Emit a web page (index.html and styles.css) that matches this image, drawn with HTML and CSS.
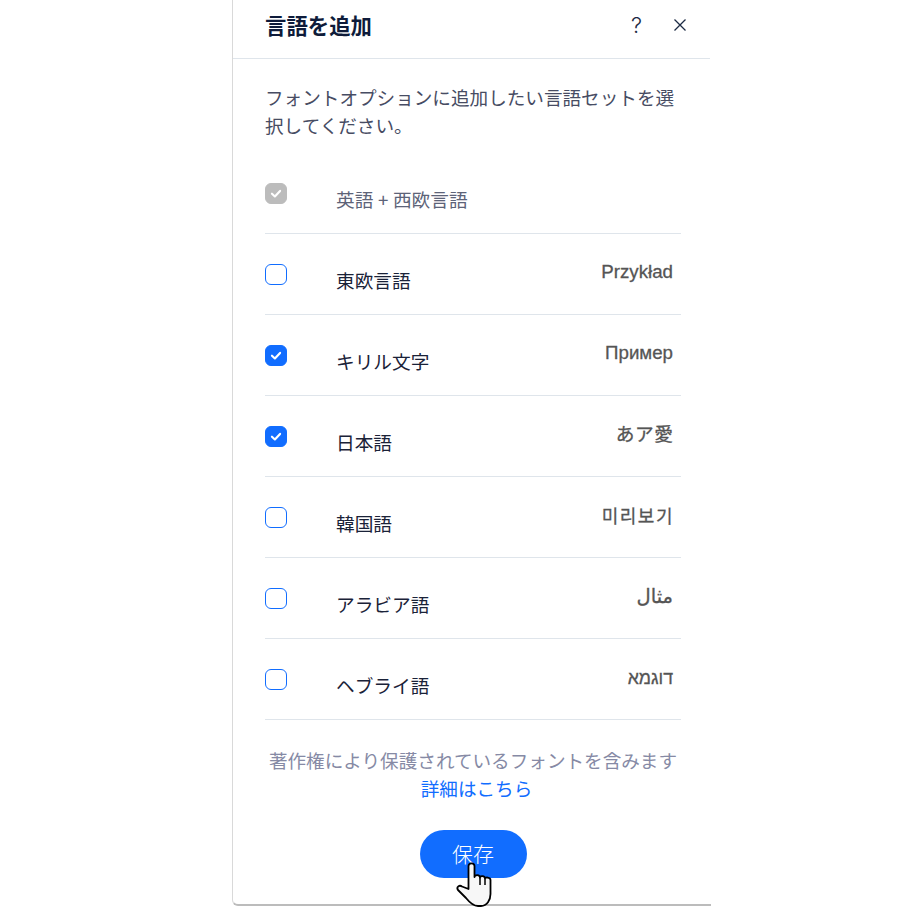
FILE: index.html
```html
<!DOCTYPE html>
<html lang="ja">
<head>
<meta charset="utf-8">
<title>言語を追加</title>
<link rel="stylesheet" href="styles.css">
</head>
<body>
<main class="panel">
  <header class="head">
    <h1 class="title">言語を追加</h1>
    <div class="head-actions">
      <span class="help">?</span>
      <svg class="close" viewBox="0 0 14 14" width="14" height="14"><path d="M1.5 1.5 12.5 12.5M12.5 1.5 1.5 12.5"/></svg>
    </div>
  </header>
  <div class="content">
    <p class="desc">フォントオプションに追加したい言語セットを選択してください。</p>
    <ul class="list">
      <li class="row row-first">
        <span class="box box-disabled"><svg viewBox="0 0 22 22"><path d="M6.3 11.2 9.7 14.4 15.7 8"/></svg></span>
        <span class="label label-disabled">英語 + 西欧言語</span>
      </li>
      <li class="row">
        <span class="box"></span>
        <span class="label">東欧言語</span>
        <span class="sample">Przykład</span>
      </li>
      <li class="row">
        <span class="box box-on"><svg viewBox="0 0 22 22"><path d="M6.3 11.2 9.7 14.4 15.7 8"/></svg></span>
        <span class="label">キリル文字</span>
        <span class="sample">Пример</span>
      </li>
      <li class="row">
        <span class="box box-on"><svg viewBox="0 0 22 22"><path d="M6.3 11.2 9.7 14.4 15.7 8"/></svg></span>
        <span class="label">日本語</span>
        <span class="sample sample-ja">あア愛</span>
      </li>
      <li class="row">
        <span class="box"></span>
        <span class="label">韓国語</span>
        <span class="sample" lang="ko">미리보기</span>
      </li>
      <li class="row">
        <span class="box"></span>
        <span class="label">アラビア語</span>
        <span class="sample" lang="ar" dir="rtl">مثال</span>
      </li>
      <li class="row">
        <span class="box"></span>
        <span class="label">ヘブライ語</span>
        <span class="sample" lang="he" dir="rtl">דוגמא</span>
      </li>
    </ul>
    <p class="note">著作権により保護されているフォントを含みます<br><a class="link" href="#">詳細はこちら</a></p>
    <div class="actions">
      <button class="save" type="button">保存</button>
      <svg class="cursor" viewBox="0 0 37 46" width="37" height="46">
        <path class="hand" d="M12.5 27V4C12.5.5 18.5.5 18.5 4V15C18.5 12.5 24 12.5 24 15.5 24 13.5 29 13.5 29 16.5 29 15 34.5 15 34.5 18V32C34.5 38 31 44 25 44H22C17 44 14 41 10 36L2 28C0 25 3.5 22.5 6 24.5Z"/>
        <path class="hand-line" d="M24 15.5V23M29 16.5V23"/>
      </svg>
    </div>
  </div>
</main>
</body>
</html>
```
FILE: styles.css
```css
* { box-sizing: border-box; }
html, body { margin: 0; padding: 0; background: #fff; }
body {
  width: 916px;
  height: 908px;
  overflow: hidden;
  font-family: "Noto Sans CJK JP", "Noto Sans", sans-serif;
}
.panel {
  margin-left: 232px;
  width: 479px;
  height: 906px;
  border-left: 1px solid #d9d9d9;
  border-bottom: 2px solid #bcbcbc;
  border-bottom-left-radius: 6px;
  background: #fff;
}
.head {
  height: 59px;
  margin-right: 1px;
  padding: 0 23px 9px 32px;
  border-bottom: 1px solid #dfe5eb;
  display: flex;
  align-items: center;
  justify-content: space-between;
}
.title {
  margin: 0;
  font-size: 21.4px;
  font-weight: 700;
  line-height: 28px;
  color: #0e1b3a;
}
.head-actions {
  display: flex;
  align-items: center;
  gap: 31px;
}
.help {
  font-family: "Inter", "Liberation Sans", sans-serif;
  font-size: 22px;
  font-weight: 300;
  line-height: 24px;
  color: #1c2a44;
}
.close { display: block; fill: none; stroke: #1c2a44; stroke-width: 1.3; }
.content { padding: 24px 30px 0 32px; position: relative; }
.desc {
  margin: 0 0 14px;
  font-size: 18.6px;
  line-height: 28px;
  color: #474c63;
  font-weight: 400;
}
.list { list-style: none; margin: 0; padding: 0; }
.row {
  height: 81px;
  border-bottom: 1px solid #dfe5eb;
  display: flex;
  align-items: flex-start;
  padding-top: 30px;
  position: relative;
}
.box {
  flex: none;
  width: 22px;
  height: 21px;
  border: 1px solid #116dff;
  border-radius: 6px;
  background: #fff;
  display: block;
}
.box svg { display: block; width: 100%; height: 100%; fill: none; stroke: #fff; stroke-width: 2.5; stroke-linecap: round; stroke-linejoin: round; }
.box-on { background: #116dff; }
.box-disabled { background: #bcbcbc; border-color: #bcbcbc; }
.label {
  margin-left: 49px;
  margin-top: 2px;
  font-size: 18.7px;
  line-height: 28px;
  word-spacing: 0.4px;
  color: #1a2238;
}
.label-disabled { color: #5d6378; }
.sample {
  margin-left: auto;
  margin-right: 8px;
  margin-top: -5px;
  font-family: "Liberation Sans", "Noto Sans CJK JP", "DejaVu Sans", sans-serif;
  font-size: 18.7px;
  line-height: 26px;
  color: #555;
  -webkit-text-stroke: 0.3px #555;
}
.sample-ja { margin-top: -4px; margin-right: 7.4px; letter-spacing: 0.6px; }
.sample:lang(ko) { font-family: "Noto Sans CJK KR", sans-serif; font-size: 18px; letter-spacing: 1.5px; margin-right: 7px; }
.sample:lang(ar) { font-family: "DejaVu Sans", sans-serif; font-size: 19.5px; margin-top: -4px; }
.sample:lang(he) { font-family: "Liberation Sans", sans-serif; font-size: 17.8px; margin-top: -4px; }
.note {
  margin: 26px 0 0;
  text-align: center;
  font-size: 18.6px;
  line-height: 28px;
  color: #868aa5;
  width: 416px;
}
.link { color: #116dff; text-decoration: none; padding-left: 7px; }
.actions {
  position: relative;
  margin-top: 28px;
  width: 416px;
  display: flex;
  justify-content: center;
}
.save {
  width: 107px;
  height: 48px;
  border: 0;
  border-radius: 24px;
  background: #116dff;
  color: #fff;
  font-family: inherit;
  font-size: 21px;
  font-weight: 300;
  padding: 0 0 2px;
}
.cursor { position: absolute; left: 191px; top: 32px; overflow: visible; }
.hand { fill: #f7f7f7; stroke: #000; stroke-width: 1.8; stroke-linejoin: round; }
.hand-line { fill: none; stroke: #000; stroke-width: 1.5; }
```
